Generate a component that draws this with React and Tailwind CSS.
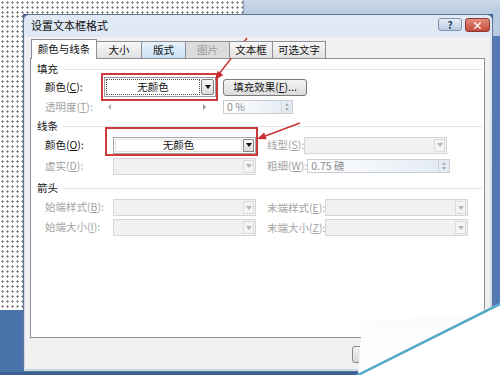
const dots = 'bg-white bg-[radial-gradient(circle,#777_0.9px,transparent_1.3px)] bg-[length:5px_5px]';

const Tri = ({ dim }) => (
    <span className={`block w-0 h-0 border-l-[3px] border-r-[3px] border-t-[4px] border-l-transparent border-r-transparent ${dim ? 'border-t-[#b8b8b8]' : 'border-t-[#111]'}`} />
);

const Lbl = ({ text, k, dim, w }) => (
    <span className={`${w} shrink-0 leading-none whitespace-nowrap ${dim ? 'text-[#a3a3a3]' : 'text-[#111]'}`}>
        {text}(<span className="underline">{k}</span>):
    </span>
);

const Header = ({ text }) => (
    <div className="h-[12px] flex items-center pl-[6px] pr-[2px]">
        <span className="leading-none text-[#111]">{text}</span>
        <div className="flex-1 h-px bg-[#dde4ea] ml-[5px]" />
    </div>
);

const DimCombo = () => (
    <div className="w-[143px] h-[17px] border border-[#d6d6d6] bg-[#f1f1f1] flex justify-end p-[1px]">
        <div className="w-[11px] border border-[#dcdcdc] bg-[#f4f4f4] flex items-center justify-center"><Tri dim /></div>
    </div>
);

const Spin = ({ value, w }) => (
    <div className={`${w} h-[14px] border border-[#c9ced5] bg-gradient-to-r from-white to-[#e3eaf3] flex`}>
        <span className="flex-1 pl-[3px] leading-[12px] text-[#8a8a8a]">{value}</span>
        <div className="w-[11px] border-l border-[#d0d0d0] flex flex-col items-center justify-center gap-[2px]">
            <span className="block w-0 h-0 border-l-[2.5px] border-r-[2.5px] border-b-[3px] border-l-transparent border-r-transparent border-b-[#aaa]" />
            <span className="block w-0 h-0 border-l-[2.5px] border-r-[2.5px] border-t-[3px] border-l-transparent border-r-transparent border-t-[#aaa]" />
        </div>
    </div>
);

const tabs = [
    { t: '颜色与线条', w: 'w-[66px]', active: true },
    { t: '大小', w: 'w-[46px]' },
    { t: '版式', w: 'w-[45px]', hover: true },
    { t: '图片', w: 'w-[45px]', dim: true },
    { t: '文本框', w: 'w-[44px]' },
    { t: '可选文字', w: 'w-[54px]' },
];

const App = () => {
    return (
        <div className="relative w-[500px] h-[375px] overflow-hidden flex flex-col bg-[#3f649c] text-[10.5px] font-['Noto_Sans_CJK_SC','Noto_Sans',sans-serif]">
            {/* top strip */}
            <div className="flex h-[14px] shrink-0">
                <div className={`w-[243px] ${dots}`} />
                <div className="flex-1 border-l border-[#8fa2ba] bg-gradient-to-b from-[#cbd8e8] to-[#b7cae0]" />
            </div>

            <div className="flex h-[358px] shrink-0">
                <div className="w-[23px] flex flex-col">
                    <div className={`h-[296px] ${dots}`} />
                    <div className="flex-1 bg-[#4a72ab]" />
                </div>

                {/* dialog */}
                <div className="w-[470px] h-[358px] flex flex-col border border-[#5f7594] rounded-t-[6px] bg-gradient-to-b from-[#e0e9f4] to-[#cad8e8] pl-[1px] pr-[2px] pb-[2px]">
                    <div className="h-[22px] flex items-start shrink-0">
                        <span className="pl-[6px] pt-[5px] text-[11px] leading-none text-[#111]">设置文本框格式</span>
                        <div className="ml-auto mt-[3px] flex gap-[3px]">
                            <div className="w-[24px] h-[13px] rounded-[3px] border border-[#7f93ad] bg-gradient-to-b from-[#e6eef8] to-[#b9cbe1] flex items-center justify-center text-[10px] leading-none font-bold text-[#2c3e57]">?</div>
                            <div className="w-[25px] h-[14px] rounded-[3px] border border-[#8a3b30] bg-gradient-to-b from-[#e48d7d] to-[#c4483a] flex items-center justify-center text-[11px] leading-none font-bold text-white">×</div>
                        </div>
                    </div>

                    <div className="flex-1 bg-[#f0f0f0] flex flex-col">
                        {/* tabs */}
                        <div className="mt-[2px] ml-[6px] h-[19px] flex items-end relative z-10">
                            {tabs.map(tab => (
                                <div
                                    key={tab.t}
                                    className={`${tab.w} flex items-center justify-center leading-none border-t border-l border-r border-[#8c8f96] -mr-px ${
                                        tab.active ? 'h-[20px] bg-white text-[#111] -mb-px' :
                                        tab.hover ? 'h-[17px] bg-gradient-to-b from-[#e6f2fb] to-[#c9e2f5] text-[#111]' :
                                        tab.dim ? 'h-[17px] bg-[#dcdcdc] text-[#9a9a9a]' :
                                        'h-[17px] bg-gradient-to-b from-[#f7f7f7] to-[#e2e2e2] text-[#111]'
                                    }`}
                                >
                                    {tab.t}
                                </div>
                            ))}
                        </div>

                        {/* panel */}
                        <div className="ml-[5px] w-[455px] h-[280px] border border-[#8c8f96] bg-white flex flex-col pt-[4px]">
                            <Header text="填充" />
                            <div className="mt-[2px] h-[20px] flex items-center pl-[14px]">
                                <Lbl text="颜色" k="C" w="w-[59px]" />
                                <div className="w-[112px] h-[20px] border border-[#9c9c9c] bg-white flex items-center p-[1px]">
                                    <div className="flex-1 h-full border border-dotted border-[#555] flex items-center justify-center leading-none text-[#111]">无颜色</div>
                                    <div className="w-[13px] h-[16px] ml-[1px] border border-[#7e7e7e] rounded-[2px] bg-gradient-to-b from-[#f7f7f7] to-[#dcdcdc] flex items-center justify-center"><Tri /></div>
                                </div>
                                <div className="ml-[7px] w-[84px] h-[17px] rounded-[3px] border border-[#7a7a7a] bg-gradient-to-b from-[#f5f5f5] to-[#dbdbdb] flex items-center justify-center leading-none text-[#111]">
                                    填充效果(<span className="underline">F</span>)...
                                </div>
                            </div>
                            <div className="mt-[3px] h-[14px] flex items-center pl-[14px]">
                                <Lbl text="透明度" k="T" dim w="w-[59px]" />
                                <div className="w-[112px] flex items-center justify-between px-[4px]">
                                    <span className="block w-0 h-0 border-t-[3px] border-b-[3px] border-r-[3px] border-t-transparent border-b-transparent border-r-[#b0b0b0]" />
                                    <span className="block w-0 h-0 border-t-[3px] border-b-[3px] border-l-[3px] border-t-transparent border-b-transparent border-l-[#9a9a9a] mr-[6px]" />
                                </div>
                                <div className="ml-[7px]"><Spin value="0 %" w="w-[70px]" /></div>
                            </div>

                            <div className="mt-[6px]"><Header text="线条" /></div>
                            <div className="mt-[4px] h-[18px] flex items-center pl-[14px]">
                                <Lbl text="颜色" k="O" w="w-[68px]" />
                                <div className="w-[143px] h-[17px] border border-[#a5a5a5] bg-white flex p-[1px]">
                                    <div className="flex-1 flex items-center justify-center leading-none text-[#111] border border-[#e2e2e2]">无颜色</div>
                                    <div className="w-[11px] ml-[1px] border border-[#8a8a8a] bg-gradient-to-b from-[#f7f7f7] to-[#dcdcdc] flex items-center justify-center"><Tri /></div>
                                </div>
                                <div className="ml-[11px]"><Lbl text="线型" k="S" dim w="w-[68px]" /></div>
                                <DimCombo />
                            </div>
                            <div className="mt-[3px] h-[18px] flex items-center pl-[14px]">
                                <Lbl text="虚实" k="D" dim w="w-[68px]" />
                                <DimCombo />
                                <div className="ml-[11px]"><Lbl text="粗细" k="W" dim w="w-[68px]" /></div>
                                <Spin value="0.75 磅" w="w-[143px]" />
                            </div>

                            <div className="mt-[7px]"><Header text="箭头" /></div>
                            <div className="mt-[5px] h-[17px] flex items-center pl-[14px]">
                                <Lbl text="始端样式" k="B" dim w="w-[68px]" />
                                <DimCombo />
                                <div className="ml-[11px]"><Lbl text="末端样式" k="E" dim w="w-[68px]" /></div>
                                <DimCombo />
                            </div>
                            <div className="mt-[3px] h-[17px] flex items-center pl-[14px]">
                                <Lbl text="始端大小" k="I" dim w="w-[68px]" />
                                <DimCombo />
                                <div className="ml-[11px]"><Lbl text="末端大小" k="Z" dim w="w-[68px]" /></div>
                                <DimCombo />
                            </div>
                        </div>

                        <div className="mt-[8px] ml-[327px] w-[75px] h-[17px] rounded-[3px] border border-[#8a8a8a] bg-gradient-to-b from-[#f4f4f4] to-[#d9d9d9]" />
                    </div>
                </div>

                <div className="flex-1 flex flex-col">
                    <div className="h-[22px] bg-[#b9cbe0]" />
                    <div className="flex-1 bg-[#5479b2]" />
                </div>
            </div>

            <div className="flex-1 bg-[#3c5f94]" />

            {/* annotations */}
            <div className="absolute left-[101px] top-[73px] w-[117px] h-[28px] border-2 border-[#cf3b3b]" />
            <div className="absolute left-[105px] top-[127px] w-[153px] h-[29px] border-2 border-[#cf3b3b]" />
            <svg className="absolute inset-0" width="500" height="375" viewBox="0 0 500 375">
                <line x1="247" y1="38" x2="219" y2="74" stroke="#cc2f2f" strokeWidth="1.4" />
                <path d="M215 80 L223.3 74.9 L217.7 70.7 Z" fill="#cc2f2f" />
                <line x1="300" y1="123" x2="264" y2="136.5" stroke="#cc2f2f" strokeWidth="1.4" />
                <path d="M257 139 L266.7 139.2 L264.2 132.6 Z" fill="#cc2f2f" />

                {/* page curl */}
                <defs>
                    <linearGradient id="fold" x1="0" y1="1" x2="0" y2="0">
                        <stop offset="0" stopColor="#ffffff" stopOpacity="1" />
                        <stop offset="0.75" stopColor="#fbfbfb" stopOpacity="0.95" />
                        <stop offset="1" stopColor="#ffffff" stopOpacity="0.2" />
                    </linearGradient>
                </defs>
                <path d="M358 375 L362 322 L478 312 L500 303 Z" fill="url(#fold)" />
                <path d="M358 375 L500 304 L500 375 Z" fill="#ffffff" />
                <line x1="354" y1="377" x2="502" y2="303" stroke="#55aac8" strokeWidth="2.5" />
            </svg>
        </div>
    );
};

export default App;
